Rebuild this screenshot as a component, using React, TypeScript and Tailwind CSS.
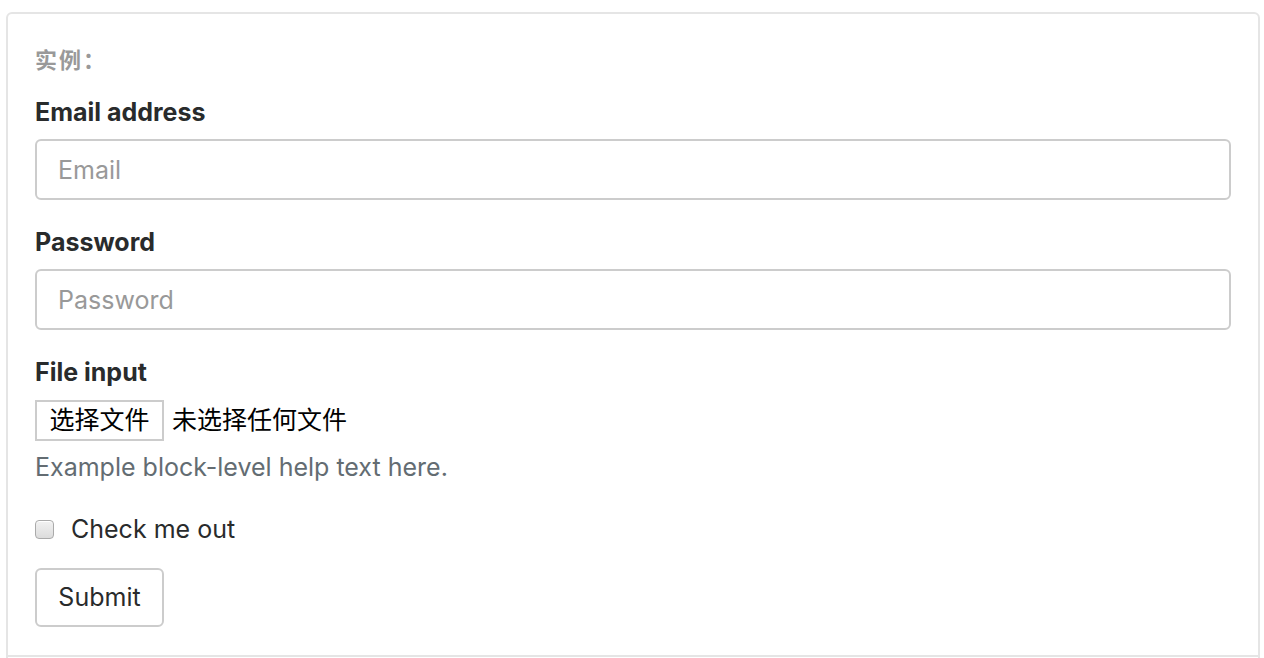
export default function App() {
  return (
    <div className="h-[658px] overflow-hidden bg-white pt-[12px] font-['Inter','Noto_Sans_CJK_SC',sans-serif] text-[#292b2c]">
      <div className="ml-[6px] w-[1254px] rounded-t-[6px] border-2 border-[#e5e5e5] px-[27px] pb-[28px] pt-[30px]">
        <div className="text-[22px] font-bold leading-[32px] tracking-[2px] text-[#999]">实例：</div>

        <form className="mt-[18px]">
          {/* Email */}
          <div className="mb-[24px]">
            <label className="mb-[9px] block text-[25px] font-bold leading-[36px]">Email address</label>
            <input
              type="email"
              placeholder="Email"
              className="block h-[61px] w-full rounded-[6px] border-2 border-[#ccc] px-[21px] text-[25px] text-[#464a4c] placeholder:text-[#999] outline-none"
            />
          </div>

          {/* Password */}
          <div className="mb-[24px]">
            <label className="mb-[9px] block text-[25px] font-bold leading-[36px]">Password</label>
            <input
              type="password"
              placeholder="Password"
              className="block h-[61px] w-full rounded-[6px] border-2 border-[#ccc] px-[21px] text-[25px] text-[#464a4c] placeholder:text-[#999] outline-none"
            />
          </div>

          {/* File input */}
          <div className="mb-[26px]">
            <label className="mb-[10px] block text-[25px] font-bold leading-[36px]">File input</label>
            <div className="flex items-center gap-[8px]">
              <span className="flex h-[41px] w-[129px] items-center justify-center border-2 border-[#ccc] bg-white text-[25px] text-black">
                选择文件
              </span>
              <span className="text-[25px] text-black">未选择任何文件</span>
            </div>
            <small className="mt-[8px] block text-[25px] leading-[36px] text-[#636c72]">
              Example block-level help text here.
            </small>
          </div>

          {/* Checkbox */}
          <label className="mb-[21px] flex items-center gap-[17px] text-[25px] leading-[36px]">
            <span className="h-[19px] w-[19px] rounded-[4px] border border-[#aaa] bg-gradient-to-b from-[#f2f2f2] to-[#dcdcdc] shadow-[inset_0_1px_0_#fff]" />
            Check me out
          </label>

          <button
            type="button"
            className="h-[59px] w-[129px] rounded-[6px] border-2 border-[#ccc] bg-white text-[25px] text-[#292b2c]"
          >
            Submit
          </button>
        </form>
      </div>
      <div className="ml-[6px] h-[40px] w-[1254px] border-x-2 border-[#e5e5e5]" />
    </div>
  );
}
